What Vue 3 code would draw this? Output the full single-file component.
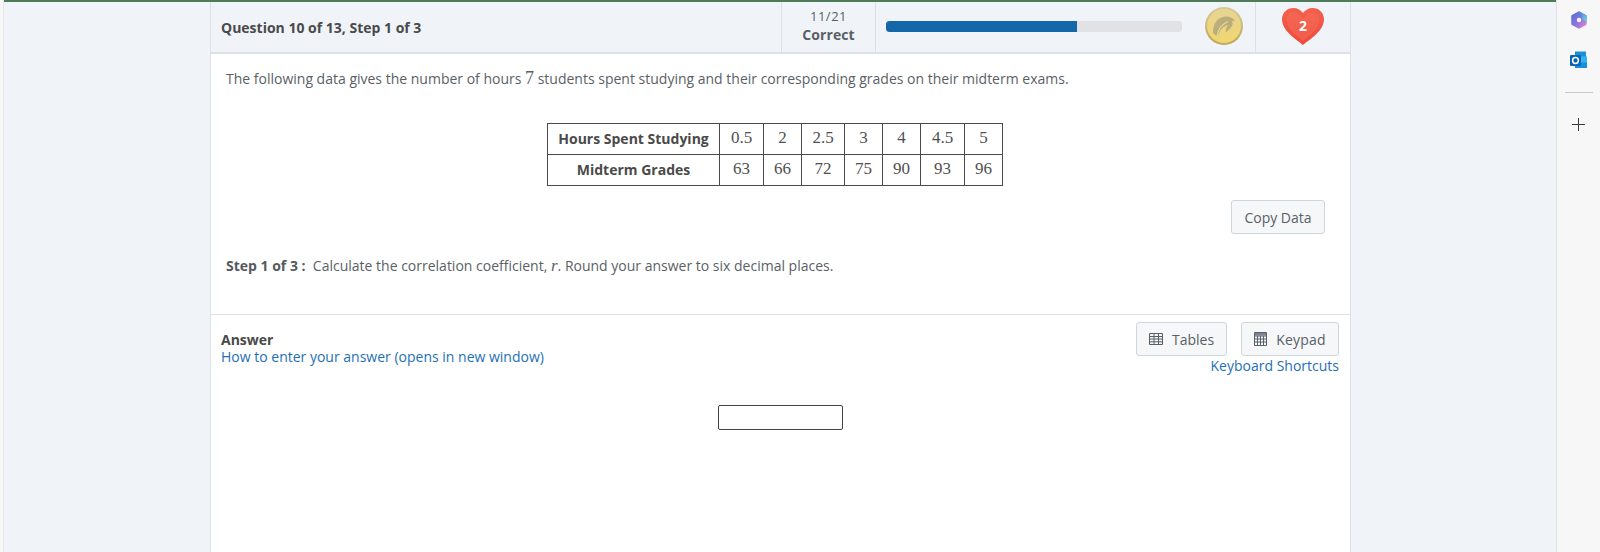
<script setup>
const hours = ['0.5', '2', '2.5', '3', '4', '4.5', '5']
const grades = ['63', '66', '72', '75', '90', '93', '96']
</script>

<template>
  <div class="page">
    <div class="edge"></div>
    <main class="stage">
      <section class="card">
        <header class="head">
          <div class="title">Question 10 of 13, Step 1 of 3</div>
          <div class="score"><span>11/21</span><strong>Correct</strong></div>
          <div class="progress">
            <div class="track"><div class="fill"></div></div>
            <svg class="coin" viewBox="0 0 38 38" aria-hidden="true">
              <defs>
                <linearGradient id="coinRim" x1="0" y1="0" x2="0" y2="1">
                  <stop offset="0" stop-color="#d8cb95" />
                  <stop offset="1" stop-color="#bda75a" />
                </linearGradient>
                <linearGradient id="coinG" x1="0" y1="0" x2="0" y2="1">
                  <stop offset="0" stop-color="#e6d494" />
                  <stop offset="1" stop-color="#f0d670" />
                </linearGradient>
              </defs>
              <circle cx="19" cy="19" r="19" fill="url(#coinRim)" />
              <circle cx="19" cy="19" r="17" fill="url(#coinG)" />
              <path d="M8 25C8 17 12 10.500 20 9.500c4.500-.5 8 1.200 10.500 4.500l-3.500-.3c1.200 2.300.6 4.800-1 6.800-1.500 1.800-3.500 3-5 5-.6-2.600.3-5.400 2.300-7.700-4.800 1.500-8.800 5-10.300 11.200C10.500 28.500 8 27 8 25Z" fill="#bcae7a" />
              <path d="M12 29.500C13 22.500 17 17 23 14.500" fill="none" stroke="#ead9a0" stroke-width="1.100" />
            </svg>
          </div>
          <div class="lives">
            <svg class="heart" viewBox="0 0 42 37" aria-hidden="true">
              <defs>
                <linearGradient id="heartG" x1="0" y1="0" x2="0" y2="1">
                  <stop offset="0" stop-color="#f4604c" />
                  <stop offset="1" stop-color="#ee4a3c" />
                </linearGradient>
              </defs>
              <path d="M21 37C16.500 32.800 0 23.500 0 11.500 0 4.500 5.200 0 11.200 0 15.500 0 19 2 21 5 23 2 26.500 0 30.800 0 36.800 0 42 4.500 42 11.500 42 23.500 25.500 32.800 21 37Z" fill="url(#heartG)" />
              <path d="M21 33C16 28.500 4.500 21 4.500 12c0-4 3-7.500 7-7.500 4 0 7 2.500 9.500 6.500 2.500-4 5.500-6.500 9.500-6.500 4 0 7 3.500 7 7.500 0 9-11.500 16.500-16.500 21Z" fill="#f6705e" opacity=".45" />
            </svg>
            <span class="count">2</span>
          </div>
        </header>

        <div class="question">
          <p class="intro">The following data gives the number of hours <span class="math">7</span> students spent studying and their corresponding grades on their midterm exams.</p>
          <table class="data">
            <tbody>
              <tr>
                <th>Hours Spent Studying</th>
                <td v-for="h in hours" :key="h">{{ h }}</td>
              </tr>
              <tr>
                <th>Midterm Grades</th>
                <td v-for="g in grades" :key="g">{{ g }}</td>
              </tr>
            </tbody>
          </table>
          <div class="copy-row"><button class="btn copy">Copy Data</button></div>
          <p class="step"><b>Step 1 of 3 :</b>&nbsp; Calculate the correlation coefficient, <i class="math">r</i>. Round your answer to six decimal places.</p>
        </div>

        <div class="answer">
          <div class="answer-top">
            <div class="answer-label">
              <strong>Answer</strong>
              <a>How to enter your answer (opens in new window)</a>
            </div>
            <div class="tools">
              <div class="tool-btns">
                <button class="btn tool">
                  <svg class="ico" viewBox="0 0 14 12" aria-hidden="true">
                    <path d="M.5.5h13v11H.5ZM.5 3.500h13M.5 6h13M.5 8.800h13M5 .5v11M9.500.5v11" fill="none" stroke="#59606a" />
                  </svg>
                  Tables
                </button>
                <button class="btn tool">
                  <svg class="ico key" viewBox="0 0 13 14" aria-hidden="true">
                    <path d="M.5.5h12v13H.5Z" fill="none" stroke="#59606a" />
                    <path d="M1 1h11v2.500H1Z" fill="#7d838b" />
                    <path d="M.5 4h12M.5 7h12M.5 10h12M3.500 4v9.500M6.500 4v9.500M9.500 4v9.500" fill="none" stroke="#59606a" />
                  </svg>
                  <span class="kp">Keypad</span>
                </button>
              </div>
              <a>Keyboard Shortcuts</a>
            </div>
          </div>
          <div class="entry"><input class="box" type="text" aria-label="Answer" /></div>
        </div>
      </section>
    </main>

    <aside class="rail">
      <svg class="rail-ico" viewBox="0 0 18 18" aria-hidden="true">
        <defs>
          <linearGradient id="cpA" x1="0" y1="0" x2="1" y2="1">
            <stop offset="0" stop-color="#2f8fe0" />
            <stop offset="1" stop-color="#72d4dc" />
          </linearGradient>
          <linearGradient id="cpB" x1="0" y1="0" x2="1" y2="1">
            <stop offset="0" stop-color="#4f6fd8" />
            <stop offset=".6" stop-color="#9a74dc" />
            <stop offset="1" stop-color="#e08ad6" />
          </linearGradient>
        </defs>
        <path d="M9 1.500 15.500 5.200v7.600L9 16.500 2.500 12.800V5.200Z" fill="url(#cpB)" stroke="url(#cpB)" stroke-width="2.500" stroke-linejoin="round" />
        <path d="M9 .5 16.800 5v5.500L12 8 12 4.800Z" fill="url(#cpA)" stroke-linejoin="round" />
        <circle cx="9" cy="9" r="2.200" fill="#f7f7f7" />
      </svg>
      <svg class="rail-ico" viewBox="0 0 18 18" aria-hidden="true">
        <path d="M5 .5h11v6H5Z" fill="#1a8fdc" />
        <path d="M5 6.500h6v5H5Z" fill="#0f6cbd" />
        <path d="M11 5.500h6v7h-6Z" fill="#35b4ec" />
        <path d="M5 11.500h12V17H5Z" fill="#1490df" />
        <rect x="0" y="4" width="11" height="11" rx="1" fill="#0a64b4" />
        <circle cx="5.500" cy="9.500" r="2.900" fill="none" stroke="#fff" stroke-width="1.500" />
      </svg>
      <div class="rail-sep"></div>
      <svg class="plus" viewBox="0 0 13 13" aria-hidden="true">
        <path d="M6.500 0v13M0 6.500h13" stroke="#3a3a3a" stroke-width="1" fill="none" />
      </svg>
    </aside>
  </div>
</template>

<style>
html, body { margin: 0; height: 100%; overflow: hidden; }
</style>

<style scoped>
.page {
  display: flex;
  width: 1600px;
  height: 552px;
  overflow: hidden;
  font-family: "Open Sans", sans-serif;
  font-size: 14px;
  color: #5a5f66;
}
.edge {
  flex: 0 0 4px;
  box-sizing: border-box;
  background: #f8f8f8;
  border-right: 1px solid #e8e8e8;
}
.stage {
  flex: 1;
  min-width: 0;
  background: #f0f4f8;
  border-top: 2px solid #4f7a5c;
  display: flex;
  justify-content: center;
  box-sizing: border-box;
}
.card {
  width: 1141px;
  box-sizing: border-box;
  background: #fff;
  border-left: 1px solid #dde1e5;
  border-right: 1px solid #dde1e5;
  margin-left: 1px;
  height: 600px;
}
.head {
  display: flex;
  height: 52px;
  box-sizing: border-box;
  background: #f0f4f8;
  border-bottom: 2px solid #dde1e5;
}
.title {
  width: 571px;
  box-sizing: border-box;
  padding: 16px 0 0 10px;
  font-weight: 700;
  font-size: 14px;
  line-height: 19px;
  color: #4a4a4a;
  border-right: 1px solid #dde1e5;
}
.score {
  width: 93px;
  border-right: 1px solid #dde1e5;
  display: flex;
  flex-direction: column;
  align-items: center;
  padding-top: 5px;
  font-size: 13px;
  line-height: 18px;
  letter-spacing: 0.5px;
}
.score strong { font-size: 14px; line-height: 19px; letter-spacing: 0.1px; }
.progress {
  flex: 0 0 380px;
  border-right: 1px solid #dde1e5;
  display: flex;
  align-items: center;
  padding-left: 10px;
  box-sizing: border-box;
}
.track {
  width: 296px;
  height: 11px;
  background: #e0e2e6;
  border-radius: 3px;
  overflow: hidden;
  margin-top: -2px;
}
.fill { width: 191px; height: 100%; background: #1467a8; border-radius: 3px 0 0 3px; }
.coin { width: 38px; height: 38px; margin-left: 23px; margin-top: -2px; }
.lives {
  flex: 1;
  display: flex;
  align-items: center;
  justify-content: center;
  position: relative;
}
.heart { width: 42px; height: 37px; margin-top: -2px; }
.count {
  position: absolute;
  left: 0;
  right: 0;
  top: 15px;
  text-align: center;
  color: #fff;
  font-weight: 700;
  font-size: 14px;
  line-height: 18px;
}
.question { padding: 13px 15px 0; height: 261px; box-sizing: border-box; border-bottom: 1px solid #dde1e5; }
.intro { margin: 0; line-height: 24px; font-size: 14px; color: #5a5f66; }
.math { font-family: "Liberation Serif", serif; font-size: 18px; line-height: 1; }
.step .math { font-size: 17px; }
.data {
  border-collapse: collapse;
  table-layout: fixed;
  width: 455px;
  margin: 32px 0 0 321px;
  font-size: 14px;
}
.data th, .data td {
  border: 1px solid #4a4a4a;
  height: 31px;
  padding: 0 0 2px;
  text-align: center;
  box-sizing: border-box;
}
.data th { width: 172px; font-weight: 700; color: #4a4a4a; }
.data td { font-family: "Liberation Serif", serif; font-size: 17px; color: #505050; width: 38px; }
.data td:nth-child(2), .data td:nth-child(7) { width: 44px; }
.data td:nth-child(4) { width: 43px; }
.copy-row { display: flex; justify-content: flex-end; margin-top: 14px; padding-right: 10px; }
.btn {
  font-family: inherit;
  font-size: 14px;
  color: #5a5f66;
  background: #f5f7f9;
  border: 1px solid #ccd6dd;
  border-radius: 3px;
  height: 34px;
  box-sizing: border-box;
  padding: 0;
}
.copy { width: 94px; }
.step { margin: 20px 0 0; line-height: 24px; font-size: 14px; }
.step b { color: #55595f; }
.answer { padding: 7px 11px 0 10px; }
.answer-top { display: flex; justify-content: space-between; }
.answer-label { display: flex; flex-direction: column; padding-top: 9px; line-height: 17px; }
.answer-label strong { color: #4a4a4a; font-size: 14px; }
a { color: #1e6fb5; font-size: 14px; }
.tools { display: flex; flex-direction: column; align-items: flex-end; line-height: 19px; }
.tool-btns { display: flex; gap: 14px; }
.tool { display: flex; align-items: center; justify-content: center; gap: 9px; }
.tool:first-child { width: 91px; }
.tool:last-child { width: 98px; }
.kp { letter-spacing: 0.2px; }
.ico { width: 14px; height: 12px; }
.ico.key { width: 13px; height: 14px; }
.entry { display: flex; justify-content: center; margin-top: 30px; }
.box {
  width: 125px;
  height: 25px;
  box-sizing: border-box;
  border: 1px solid #444;
  border-radius: 2px;
  background: #fff;
}
.rail {
  width: 44px;
  background: #f7f7f7;
  border-left: 1px solid #e3e3e3;
  box-sizing: border-box;
  display: flex;
  flex-direction: column;
  align-items: center;
  padding-top: 11px;
}
.rail-ico { width: 18px; height: 18px; }
.rail-ico + .rail-ico { margin-top: 22px; }
.rail-sep { width: 28px; height: 1px; background: #c9c9c9; margin-top: 23px; }
.plus { width: 13px; height: 13px; margin-top: 25px; }
</style>
